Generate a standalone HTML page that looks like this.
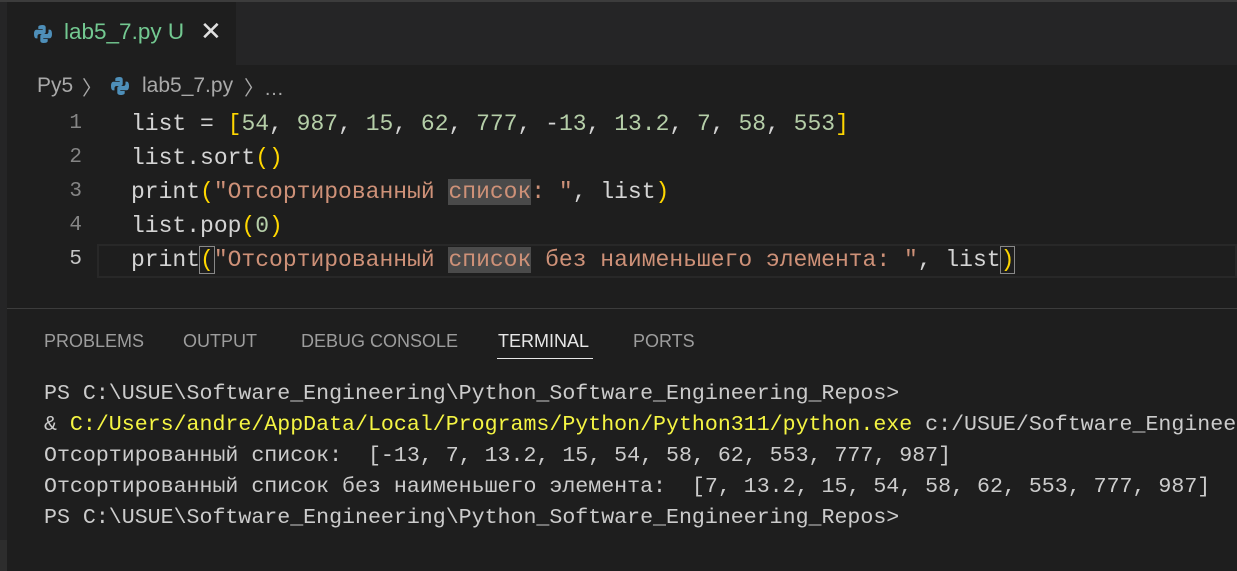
<!DOCTYPE html>
<html><head><meta charset="utf-8"><style>
*{margin:0;padding:0;box-sizing:border-box}
body{width:1237px;height:571px;background:#1e1e1e;overflow:hidden;position:relative;font-family:"Liberation Sans",sans-serif}
.abs{position:absolute}
.mono{font-family:"Liberation Mono","DejaVu Sans Mono",monospace;white-space:pre}
.code{font-size:23px;line-height:34px;color:#d4d4d4}
.term{font-size:21.6px;line-height:31px;color:#cccccc}
.n{color:#b5cea8}.s{color:#ce9178}.b{color:#ffd700}.y{color:#f5f543}
.hl{background:#4a4a4a}
.ln{color:#858585;font-size:21px;width:60px;text-align:right}
.pt{font-size:18px;color:#9d9d9d;top:331px}
</style></head><body>
<div class="abs" style="left:0;top:0;width:1237px;height:2px;background:#3c3c3c"></div>
<div class="abs" style="left:0;top:2px;width:1237px;height:63px;background:#252526"></div>
<div class="abs" style="left:7px;top:2px;width:229px;height:63px;background:#1e1e1e"></div>
<div class="abs" style="left:0;top:65px;width:7px;height:475px;background:#252526"></div>
<div class="abs" style="left:0;top:540px;width:7px;height:31px;background:#2d2d2d"></div>
<svg class="abs" style="left:33px;top:24px" width="20" height="20" viewBox="0 0 20 20"><path d="M9.5 1C5 1 5.3 3 5.3 3v2h4.4v.7H3.5S1 5.4 1 10s2.2 4.4 2.2 4.4h1.3v-2.1s-.1-2.3 2.2-2.3h3.8s2.2 0 2.2-2.1V3.5S13 1 9.5 1z" fill="#4e8fb9"/><path d="M10.5 19c4.5 0 4.2-2 4.2-2v-2h-4.4v-.7h6.2S19 14.6 19 10s-2.2-4.4-2.2-4.4h-1.3v2.1s.1 2.3-2.2 2.3H9.5s-2.2 0-2.2 2.1v4.4S7 19 10.5 19z" fill="#4e8fb9"/></svg>
<div class="abs" style="left:64px;top:19px;font-size:22.5px;color:#73c991">lab5_7.py&nbsp;U</div>
<div class="abs" style="left:200px;top:16px;font-size:26px;color:#e0e0e0">✕</div>
<div class="abs" style="left:37px;top:74px;font-size:21px;color:#a9a9a9">Py5</div>
<div class="abs" style="left:82px;top:72px;font-size:20px;color:#a9a9a9">〉</div>
<svg class="abs" style="left:110px;top:76px" width="20" height="20" viewBox="0 0 20 20"><path d="M9.5 1C5 1 5.3 3 5.3 3v2h4.4v.7H3.5S1 5.4 1 10s2.2 4.4 2.2 4.4h1.3v-2.1s-.1-2.3 2.2-2.3h3.8s2.2 0 2.2-2.1V3.5S13 1 9.5 1z" fill="#4e8fb9"/><path d="M10.5 19c4.5 0 4.2-2 4.2-2v-2h-4.4v-.7h6.2S19 14.6 19 10s-2.2-4.4-2.2-4.4h-1.3v2.1s.1 2.3-2.2 2.3H9.5s-2.2 0-2.2 2.1v4.4S7 19 10.5 19z" fill="#4e8fb9"/></svg>
<div class="abs" style="left:142px;top:74px;font-size:21px;color:#a9a9a9">lab5_7.py</div>
<div class="abs" style="left:244px;top:72px;font-size:20px;color:#a9a9a9">〉…</div>
<div class="abs" style="left:97px;top:244px;width:1140px;height:34px;border:2px solid #282828"></div>
<div class="abs mono ln" style="left:22px;top:107px;line-height:34px">1
2
3
4
<span style="color:#c6c6c6">5</span></div>
<div class="abs mono code" style="left:131px;top:107px">list = <span class="b">[</span><span class="n">54</span>, <span class="n">987</span>, <span class="n">15</span>, <span class="n">62</span>, <span class="n">777</span>, -<span class="n">13</span>, <span class="n">13.2</span>, <span class="n">7</span>, <span class="n">58</span>, <span class="n">553</span><span class="b">]</span>
list.sort<span class="b">()</span>
print<span class="b">(</span><span class="s">"Отсортированный <span class="hl">список</span>: "</span>, list<span class="b">)</span>
list.pop<span class="b">(</span><span class="n">0</span><span class="b">)</span>
print<span class="b" style="outline:1px solid #888;">(</span><span class="s">"Отсортированный <span class="hl">список</span> без наименьшего элемента: "</span>, list<span class="b" style="outline:1px solid #888;">)</span></div>
<div class="abs" style="left:7px;top:308px;width:1230px;height:1px;background:#3c3c3c"></div>
<div class="abs pt" style="left:44px">PROBLEMS</div>
<div class="abs pt" style="left:183px">OUTPUT</div>
<div class="abs pt" style="left:301px">DEBUG CONSOLE</div>
<div class="abs pt" style="left:498px;color:#e7e7e7">TERMINAL</div>
<div class="abs" style="left:497px;top:358px;width:96px;height:1px;background:#e7e7e7"></div>
<div class="abs pt" style="left:633px">PORTS</div>
<div class="abs mono term" style="left:44px;top:379px">PS C:\USUE\Software_Engineering\Python_Software_Engineering_Repos>
&amp; <span class="y">C:/Users/andre/AppData/Local/Programs/Python/Python311/python.exe</span> c:/USUE/Software_Engineering
Отсортированный список:  [-13, 7, 13.2, 15, 54, 58, 62, 553, 777, 987]
Отсортированный список без наименьшего элемента:  [7, 13.2, 15, 54, 58, 62, 553, 777, 987]
PS C:\USUE\Software_Engineering\Python_Software_Engineering_Repos></div>
</body></html>
